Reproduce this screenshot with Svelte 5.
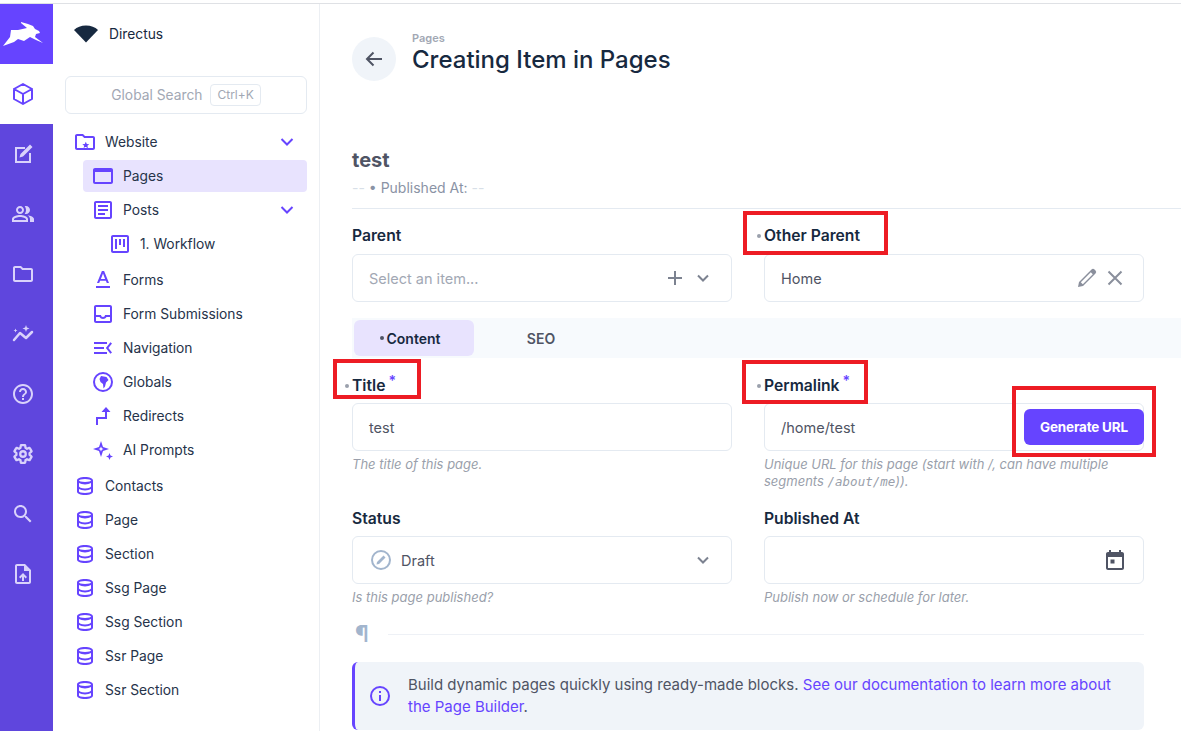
<script>
  const gear = "M19.140 12.940c.04-.3.06-.61.06-.94 0-.32-.02-.64-.07-.94l2.030-1.580c.18-.14.23-.41.12-.61l-1.920-3.320c-.12-.22-.37-.29-.59-.22l-2.390.96c-.5-.38-1.030-.7-1.620-.94l-.36-2.540c-.04-.24-.24-.41-.48-.41h-3.840c-.24 0-.43.17-.47.41l-.36 2.540c-.59.24-1.130.57-1.620.94l-2.390-.96c-.22-.08-.47 0-.59.22L2.740 8.870c-.12.21-.08.47.12.61l2.030 1.580c-.05.3-.09.63-.09.94s.02.64.07.94l-2.030 1.580c-.18.14-.23.41-.12.61l1.920 3.320c.12.22.37.29.59.22l2.390-.96c.5.38 1.030.7 1.620.94l.36 2.540c.05.24.24.41.48.41h3.840c.24 0 .44-.17.47-.41l.36-2.540c.59-.24 1.130-.56 1.620-.94l2.390.96c.22.08.47 0 .59-.22l1.920-3.320c.12-.22.07-.47-.12-.61l-2.010-1.580zM12 15a3 3 0 1 1 0-6 3 3 0 0 1 0 6z";

  const modules = [
    { d: "M12 2 21 7v10l-9 5-9-5V7ZM3 7l9 5 9-5M12 12v10", stroke: true, active: true },
    { d: "M4 5h10v2H6v12h12v-8h2v10H4ZM19 2.500l2.500 2.500L12 14.500l-3.500 1 1-3.500Z" },
    { d: "M16.670 13.130C18.040 14.060 19 15.320 19 17v3h4v-3c0-2.180-3.570-3.470-6.330-3.870zM15 12c2.210 0 4-1.790 4-4s-1.790-4-4-4c-.47 0-.91.1-1.330.24C14.500 5.270 15 6.580 15 8s-.5 2.730-1.330 3.760c.42.14.86.24 1.330.24zM9 12c2.210 0 4-1.790 4-4s-1.790-4-4-4-4 1.790-4 4 1.790 4 4 4zm0-6c1.100 0 2 .9 2 2s-.9 2-2 2-2-.9-2-2 .9-2 2-2zm0 7c-2.670 0-8 1.340-8 4v3h16v-3c0-2.660-5.330-4-8-4zm6 5H3v-.99C3.200 16.290 6.300 15 9 15s5.800 1.290 6 2v1z" },
    { d: "M20 6h-8l-2-2H4c-1.100 0-1.990.9-1.990 2L2 18c0 1.100.9 2 2 2h16c1.100 0 2-.9 2-2V8c0-1.100-.9-2-2-2zm0 12H4V6h5.200l2 2H20v10z" },
    { d: "M3 18 9 11l6 5 6-6", stroke: true, wide: true, extra: "M15 3l.9 2.600L18.500 6.500l-2.600.9L15 10l-.9-2.600L11.500 6.500l2.600-.9ZM4.500 6.500l.6 1.400 1.400.6-1.400.6-.6 1.400-.6-1.400-1.400-.6 1.400-.6Z" },
    { d: "M11 18h2v-2h-2v2zm1-16C6.480 2 2 6.480 2 12s4.480 10 10 10 10-4.480 10-10S17.520 2 12 2zm0 18c-4.410 0-8-3.590-8-8s3.590-8 8-8 8 3.590 8 8-3.590 8-8 8zm0-14c-2.210 0-4 1.790-4 4h2c0-1.100.9-2 2-2s2 .9 2 2c0 2-3 1.750-3 5h2c0-2.250 3-2.500 3-5 0-2.210-1.790-4-4-4z" },
    { d: gear, stroke: true, wide: true, shrink: true },
    { d: "M15.500 14h-.79l-.28-.27C15.410 12.590 16 11.110 16 9.500 16 5.910 13.090 3 9.500 3S3 5.910 3 9.500 5.910 16 9.500 16c1.610 0 3.090-.59 4.230-1.570l.27.28v.79l5 4.990L20.490 19l-4.990-5zm-6 0C7.010 14 5 11.990 5 9.500S7.010 5 9.500 5 14 7.010 14 9.500 11.990 14 9.500 14z" },
    { d: "M14 2H6c-1.100 0-1.990.9-1.990 2L4 20c0 1.100.89 2 1.990 2H18c1.100 0 2-.9 2-2V8l-6-6zm4 18H6V4h7v5h5v11zM8 15.010l1.410 1.410L11 14.840V19h2v-4.160l1.590 1.590L16 15.010 12.010 11 8 15.010z" },
  ];

  const db = "M12 3c-4.700 0-8 1.500-8 3.500v11C4 19.500 7.300 21 12 21s8-1.500 8-3.500v-11C20 4.500 16.700 3 12 3Zm0 2c3.800 0 6 1 6 1.500S15.800 8 12 8 6 7 6 6.500 8.200 5 12 5Zm6 12.500c0 .5-2.200 1.500-6 1.500s-6-1-6-1.500v-2.400c1.500.9 3.600 1.400 6 1.400s4.500-.5 6-1.400Zm0-5c0 .5-2.200 2-6 2s-6-1.500-6-2V9.100c1.500.9 3.600 1.400 6 1.400s4.500-.5 6-1.400Z";

  const nav = [
    { label: "Website", depth: 0, chevron: true, d: "M20 6h-8l-2-2H4c-1.100 0-2 .9-2 2v12c0 1.100.9 2 2 2h16c1.100 0 2-.9 2-2V8c0-1.100-.9-2-2-2zm0 12H4V6h5.200l2 2H20v10zm-8-1 1-.1 2 1.300-.6-2.400 1.900-1.600-2.500-.2-1-2.300-1 2.300-2.500.2 1.900 1.600-.6 2.400Z" },
    { label: "Pages", depth: 1, active: true, d: "M20 4H4c-1.100 0-2 .9-2 2v12c0 1.100.9 2 2 2h16c1.100 0 2-.9 2-2V6c0-1.100-.9-2-2-2Zm0 14H4V8h16Z" },
    { label: "Posts", depth: 1, chevron: true, d: "M19 3H5c-1.100 0-2 .9-2 2v14c0 1.100.9 2 2 2h14c1.100 0 2-.9 2-2V5c0-1.100-.9-2-2-2Zm0 16H5V5h14ZM7 7h10v2H7Zm0 4h10v2H7Zm0 4h7v2H7Z" },
    { label: "1. Workflow", depth: 2, gapAfter: true, d: "M19 3H5c-1.100 0-2 .9-2 2v14c0 1.100.9 2 2 2h14c1.100 0 2-.9 2-2V5c0-1.100-.9-2-2-2Zm0 16H5V5h14ZM7 7h2v10H7Zm4 0h2v6h-2Zm4 0h2v8h-2Z" },
    { label: "Forms", depth: 1, d: "M5 18h14v2H5ZM10.900 3h2.200L18 15h-2.200l-.9-2.200H9.100L8.200 15H6Zm-1 8h4.200L12 5.500Z" },
    { label: "Form Submissions", depth: 1, d: "M19 3H5c-1.100 0-2 .9-2 2v14c0 1.100.9 2 2 2h14c1.100 0 2-.9 2-2V5c0-1.100-.9-2-2-2Zm0 16H5v-4h3.500c.7 1.200 2 2 3.500 2s2.800-.8 3.500-2H19Zm0-6h-5c0 1.100-.9 2-2 2s-2-.9-2-2H5V5h14Z" },
    { label: "Navigation", depth: 1, d: "M3 6h13v2H3Zm0 5h10v2H3Zm0 5h13v2H3Zm18-8.600L17.400 12l3.600 4.600-1.600 1.200L14.900 12l4.500-5.800Z" },
    { label: "Globals", depth: 1, d: "M12 2a10 10 0 1 0 0 20 10 10 0 0 0 0-20Zm0 2a8 8 0 1 1 0 16 8 8 0 0 1 0-16ZM10 6l5.500 1 2 3-2.500 2.500-1 4-1.500 2-.5-4.500-2.500-2-1-3Z" },
    { label: "Redirects", depth: 1, d: "M5 21v-8h9V8h-3.500L15 3l4.500 5H16v7H7v6Z" },
    { label: "AI Prompts", depth: 1, gapAfter: true, d: "M10 3l2 6 6 2-6 2-2 6-2-6-6-2 6-2Zm0 5.500L9.200 10.200 7.500 11l1.700.8.800 1.700.8-1.700 1.700-.8-1.700-.8ZM18.500 15l1 2.500 2.500 1-2.500 1-1 2.500-1-2.500-2.500-1 2.500-1Z" },
    { label: "Contacts", depth: 0, d: db },
    { label: "Page", depth: 0, d: db },
    { label: "Section", depth: 0, d: db },
    { label: "Ssg Page", depth: 0, d: db },
    { label: "Ssg Section", depth: 0, d: db },
    { label: "Ssr Page", depth: 0, d: db },
    { label: "Ssr Section", depth: 0, d: db },
  ];

  const annotations = [
    { x: 743, y: 211, w: 145, h: 44 },
    { x: 333, y: 359, w: 88, h: 40 },
    { x: 742, y: 360, w: 126, h: 44 },
    { x: 1012, y: 386, w: 144, h: 71 },
  ];
</script>

<div class="app">
  <div class="topline"></div>
  <div class="shell">
    <aside class="modules">
      <div class="logo">
        <svg width="53" height="60" viewBox="0 0 53 60">
          <path fill="#fff" d="M3 42 10 33 11 26 18 26 27 24 21 19 21 18 28 20 33 22 35 25 39 27 40 29 36 30 35 33 43 39 36 36 30 33 24 37 18 35 14 38Z"/>
        </svg>
      </div>
      {#each modules as m}
        <div class="module" class:active={m.active}>
          <svg width="24" height="24" viewBox="0 0 24 24">
            {#if m.stroke}
              <path
                d={m.d}
                fill="none"
                stroke="currentColor"
                stroke-width={m.wide ? 2.5 : 2}
                stroke-linejoin="round"
                stroke-linecap="round"
                transform={m.shrink ? "translate(12 12) scale(.92) translate(-12 -12)" : undefined}
              />
              {#if m.extra}<path d={m.extra} fill="currentColor" />{/if}
            {:else}
              <path d={m.d} fill="currentColor" fill-rule="evenodd" />
            {/if}
          </svg>
        </div>
      {/each}
    </aside>

    <nav class="nav">
      <div class="project">
        <svg width="26" height="18" viewBox="0 0 26 18"><path fill="#172940" d="M1 5C4 2 8 .5 13 .5S22 2 25 5L13 17.500Z"/></svg>
        <span>Directus</span>
      </div>
      <div class="search">
        <span>Global Search</span>
        <kbd>Ctrl+K</kbd>
      </div>
      <ul class="tree">
        {#each nav as item}
          <li class="row depth{item.depth}" class:active={item.active} class:gap={item.gapAfter}>
            <svg width="24" height="24" viewBox="0 0 24 24"><path d={item.d} fill="#6644ff" fill-rule="evenodd" /></svg>
            <span>{item.label}</span>
            {#if item.chevron}
              <svg class="chev" width="24" height="24" viewBox="0 0 24 24"><path d="M6.500 9 12 14.500 17.500 9" fill="none" stroke="#6644ff" stroke-width="2" /></svg>
            {/if}
          </li>
        {/each}
      </ul>
    </nav>

    <main class="main">
      <header class="header">
        <button class="back" aria-label="Back">
          <svg width="24" height="24" viewBox="0 0 24 24"><path d="M20 12H5.500M11.500 5.500 5 12l6.500 6.500" fill="none" stroke="#4f5464" stroke-width="2" /></svg>
        </button>
        <div class="titles">
          <div class="crumb">Pages</div>
          <h1>Creating Item in Pages</h1>
        </div>
      </header>

      <section class="summary">
        <h2>test</h2>
        <p><span class="dash">--</span> • Published At: <span class="dash">--</span></p>
      </section>

      <div class="grid top">
        <div class="field">
          <div class="label plain">Parent</div>
          <div class="input muted">
            <span>Select an item...</span>
            <span class="icons">
              <svg width="24" height="24" viewBox="0 0 24 24"><path d="M12 5v14M5 12h14" fill="none" stroke="#7c8290" stroke-width="2" /></svg>
              <svg width="24" height="24" viewBox="0 0 24 24"><path d="M7 9.500l5 5 5-5" fill="none" stroke="#7c8290" stroke-width="2" /></svg>
            </span>
          </div>
        </div>
        <div class="field">
          <div class="label">Other Parent</div>
          <div class="input">
            <span>Home</span>
            <span class="icons">
              <svg width="24" height="24" viewBox="0 0 24 24"><path d="M16.500 3.500a2.100 2.100 0 0 1 3 0l1 1a2.100 2.100 0 0 1 0 3L8 20l-5 1 1-5ZM5.800 16.200l2 2 10-10-2-2Z" fill="#8a8f9c" fill-rule="evenodd" /></svg>
              <svg width="24" height="24" viewBox="0 0 24 24"><path d="M5.500 5.500l13 13M18.500 5.500l-13 13" fill="none" stroke="#8a8f9c" stroke-width="2" /></svg>
            </span>
          </div>
        </div>
      </div>

      <div class="tabs">
        <div class="tab on"><i class="dot"></i>Content</div>
        <div class="tab">SEO</div>
      </div>

      <div class="grid">
        <div class="field">
          <div class="label">Title <sup>*</sup></div>
          <div class="input"><span>test</span></div>
          <div class="hint">The title of this page.</div>
        </div>
        <div class="field">
          <div class="label">Permalink <sup>*</sup></div>
          <div class="input urlinput">
            <span>/home/test</span>
            <button class="generate">Generate URL</button>
          </div>
          <div class="hint">Unique URL for this page (start with /, can have multiple segments <code>/about/me</code>)).</div>
        </div>
        <div class="field status">
          <div class="label plain">Status</div>
          <div class="input">
            <span class="draft">
              <svg width="24" height="24" viewBox="0 0 24 24"><path d="M12 2a10 10 0 1 0 0 20 10 10 0 0 0 0-20Zm0 2a8 8 0 1 1 0 16 8 8 0 0 1 0-16Zm2.500 3.500L8 14l-.5 2.500L10 16l6.500-6.500Z" fill="#a2b5cd" fill-rule="evenodd" /></svg>
              Draft
            </span>
            <span class="icons"><svg width="24" height="24" viewBox="0 0 24 24"><path d="M7 9.500l5 5 5-5" fill="none" stroke="#7c8290" stroke-width="2" /></svg></span>
          </div>
          <div class="hint">Is this page published?</div>
        </div>
        <div class="field status">
          <div class="label plain">Published At</div>
          <div class="input">
            <span></span>
            <span class="icons"><svg width="24" height="24" viewBox="0 0 24 24"><path d="M19 4h-1V2h-2v2H8V2H6v2H5c-1.100 0-2 .9-2 2v14c0 1.100.9 2 2 2h14c1.100 0 2-.9 2-2V6c0-1.100-.9-2-2-2Zm0 16H5V9h14ZM7.500 11.500h4v4h-4Z" fill="#4f5464" fill-rule="evenodd" /></svg></span>
          </div>
          <div class="hint">Publish now or schedule for later.</div>
        </div>
      </div>

      <div class="pilcrow"><span>¶</span><hr /></div>

      <div class="notice">
        <svg width="24" height="24" viewBox="0 0 24 24"><path d="M12 2a10 10 0 1 0 0 20 10 10 0 0 0 0-20Zm0 2a8 8 0 1 1 0 16 8 8 0 0 1 0-16Zm-1 3h2v2h-2Zm0 4h2v6h-2Z" fill="#6644ff" fill-rule="evenodd" /></svg>
        <p>Build dynamic pages quickly using ready-made blocks. <a href="#docs">See our documentation to learn more about the Page Builder</a>.</p>
      </div>
    </main>
  </div>

  {#each annotations as a}
    <div class="mark" style="left:{a.x}px;top:{a.y}px;width:{a.w}px;height:{a.h}px"></div>
  {/each}
</div>

<style>
  :global(body) {
    margin: 0;
    background: #fff;
  }

  .app {
    position: relative;
    width: 1181px;
    height: 731px;
    overflow: hidden;
    font-family: "Inter", "Liberation Sans", sans-serif;
    font-size: 14px;
    color: #172940;
  }

  .topline {
    height: 3px;
    border-bottom: 1px solid #dfe1e5;
  }

  .shell {
    display: flex;
    height: 727px;
  }

  .modules {
    width: 53px;
    flex: none;
    background: #5f46dd;
    color: #d9d2fb;
  }

  .logo {
    height: 60px;
    background: #6644ff;
  }

  .logo svg {
    display: block;
  }

  .module {
    height: 60px;
    display: flex;
    align-items: center;
    justify-content: center;
    padding-right: 7px;
  }

  .module.active {
    background: #fff;
    color: #6644ff;
  }

  .nav {
    width: 267px;
    flex: none;
    border-right: 1px solid #eceff3;
    padding: 0 12px;
    box-sizing: border-box;
  }

  .project {
    display: flex;
    align-items: center;
    gap: 10px;
    height: 60px;
    padding-left: 8px;
    font-size: 13.800px;
  }

  .search {
    height: 38px;
    margin-top: 12px;
    border: 1px solid #e4eaf1;
    border-radius: 6px;
    box-sizing: border-box;
    display: flex;
    align-items: center;
    justify-content: center;
    gap: 8px;
    color: #a2a8b4;
    font-size: 13.800px;
  }

  kbd {
    font: inherit;
    font-size: 12px;
    border: 1px solid #e4eaf1;
    border-radius: 4px;
    padding: 2px 6px;
    line-height: 16px;
  }

  .tree {
    list-style: none;
    margin: 11px 0 0;
    padding: 0;
  }

  .row {
    height: 34px;
    display: flex;
    align-items: center;
    gap: 8px;
    font-size: 13.800px;
    color: #26334a;
    box-sizing: border-box;
    position: relative;
  }

  .row.gap {
    margin-bottom: 2px;
  }

  .depth0 {
    padding-left: 8px;
  }

  .depth1 {
    margin-left: 18px;
    padding-left: 8px;
  }

  .depth2 {
    margin-left: 35px;
    padding-left: 8px;
  }

  .row.active {
    height: 32px;
    margin-top: 1px;
    margin-bottom: 1px;
    background: #e8e3fe;
    border-radius: 4px;
  }

  .chev {
    position: absolute;
    right: 8px;
    top: 5px;
  }

  .main {
    flex: 1;
    padding-left: 32px;
    min-width: 0;
  }

  .header {
    display: flex;
    gap: 16px;
    padding-top: 33px;
    height: 44px;
  }

  .back {
    width: 44px;
    height: 44px;
    border-radius: 50%;
    border: 0;
    padding: 0;
    background: #f0f4f9;
    display: flex;
    align-items: center;
    justify-content: center;
  }

  .titles {
    margin-top: -6px;
  }

  .crumb {
    font-size: 11px;
    font-weight: 600;
    line-height: 14px;
    color: #a2a8b4;
  }

  h1 {
    margin: 0;
    font-size: 24px;
    line-height: 30px;
    font-weight: 500;
    color: #172940;
  }

  .summary {
    margin-top: 67px;
    border-bottom: 1px solid #e4eaf1;
    height: 60px;
  }

  h2 {
    margin: 0;
    font-size: 20px;
    line-height: 24px;
    font-weight: 700;
    color: #4f5464;
  }

  .summary p {
    margin: 7px 0 0;
    font-size: 14px;
    line-height: 18px;
    color: #8a93a5;
  }

  .dash {
    color: #d8dfe8;
  }

  .grid {
    display: grid;
    grid-template-columns: 380px 380px;
    column-gap: 32px;
    row-gap: 0;
  }

  .grid.top {
    margin-top: 17px;
  }

  .grid.top .label {
    margin-bottom: 8px;
  }

  .label {
    font-weight: 600;
    font-size: 15.700px;
    line-height: 20px;
    color: #172940;
    margin-bottom: 7px;
    height: 20px;
  }

  .label:not(.plain)::before {
    content: "";
    display: inline-block;
    width: 4px;
    height: 4px;
    border-radius: 50%;
    background: #9aa0ac;
    margin-left: -7px;
    margin-right: 3px;
    vertical-align: 3px;
  }

  sup {
    color: #6644ff;
    font-size: 14px;
    line-height: 0;
    vertical-align: 5px;
    margin-left: -1px;
  }

  .input {
    height: 48px;
    box-sizing: border-box;
    border: 1px solid #e4eaf1;
    border-radius: 6px;
    padding: 0 16px;
    display: flex;
    align-items: center;
    justify-content: space-between;
    font-size: 14.500px;
    color: #4f5464;
  }

  .input.muted {
    color: #a2a8b4;
  }

  .icons {
    display: flex;
    gap: 4px;
  }

  .urlinput {
    position: relative;
  }

  .generate {
    position: absolute;
    right: -1px;
    top: 5px;
    width: 120px;
    height: 36px;
    border: 0;
    border-radius: 6px;
    background: #6644ff;
    color: #fff;
    font: inherit;
    font-size: 13.500px;
    font-weight: 700;
    letter-spacing: -0.2px;
    padding: 0;
  }

  .tabs {
    display: flex;
    height: 40px;
    margin-top: 16px;
    margin-bottom: 18px;
    padding: 2px;
    box-sizing: border-box;
    background: #f7fafd;
  }

  .tab {
    width: 120px;
    height: 36px;
    display: flex;
    align-items: center;
    justify-content: center;
    border-radius: 6px;
    font-weight: 600;
    font-size: 14px;
    color: #4f5464;
  }

  .tab + .tab {
    margin-left: 7px;
  }

  .tab.on {
    background: #e8e3fe;
    color: #172940;
    padding-right: 8px;
    box-sizing: border-box;
  }

  .dot {
    width: 4px;
    height: 4px;
    border-radius: 50%;
    background: #4f5464;
    margin-right: 3px;
  }

  .hint {
    margin-top: 5px;
    font-size: 13px;
    line-height: 17px;
    font-style: italic;
    color: #9a9fab;
    min-height: 34px;
  }

  code {
    font-family: "DejaVu Sans Mono", "Liberation Mono", monospace;
    font-size: 12.500px;
    font-style: italic;
    line-height: 1;
  }

  .status {
    margin-top: 19px;
  }

  .status .hint {
    min-height: 0;
  }

  .draft {
    display: flex;
    align-items: center;
    gap: 8px;
  }

  .pilcrow {
    display: flex;
    align-items: center;
    width: 792px;
    margin-top: 14px;
    height: 28px;
  }

  .pilcrow span {
    width: 36px;
    flex: none;
    font-size: 23px;
    line-height: 28px;
    font-weight: 600;
    padding-left: 3px;
    box-sizing: border-box;
    color: #a2b5cd;
  }

  .pilcrow hr {
    flex: 1;
    margin: 0;
    border: 0;
    border-top: 1px solid #eef1f6;
  }

  .notice {
    width: 792px;
    box-sizing: border-box;
    margin-top: 14px;
    height: 68px;
    display: flex;
    align-items: center;
    gap: 16px;
    padding: 0 16px 0 13px;
    background: #f0f4f9;
    border-left: 3px solid #6644ff;
    border-radius: 6px;
    color: #4f5464;
    font-size: 15px;
  }

  .notice svg {
    flex: none;
  }

  .notice p {
    margin: 0;
    line-height: 22px;
  }

  .notice a {
    color: #6644ff;
    text-decoration: none;
  }

  .mark {
    position: absolute;
    box-sizing: border-box;
    border: 4px solid #ed1c24;
  }
</style>
